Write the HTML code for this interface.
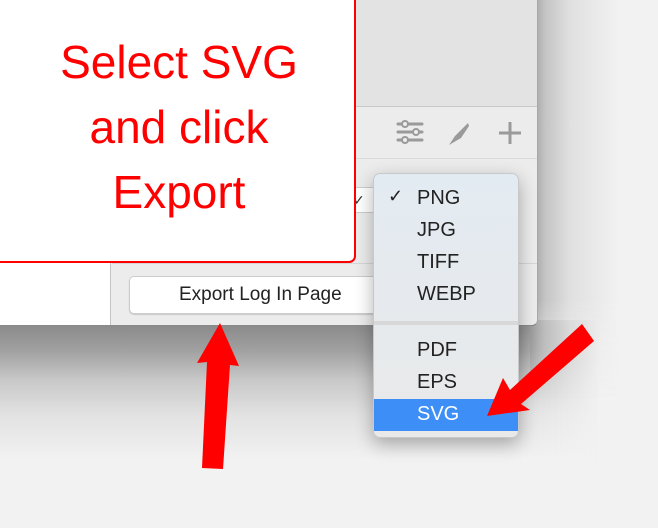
<!DOCTYPE html>
<html><head><meta charset="utf-8"><style>
*{margin:0;padding:0;box-sizing:border-box}
body{width:658px;height:528px;overflow:hidden;position:relative;font-family:"Liberation Sans",sans-serif;background:#f2f2f2}
.abs{position:absolute}
</style></head><body>
<div class="abs" style="left:0;top:320px;width:600px;height:140px;background:linear-gradient(#868686,#a0a0a0 30px,#c8c8c8 60px,#e2e2e2 95px,#f2f2f2 140px);-webkit-mask-image:linear-gradient(90deg,#000 520px,transparent 600px);mask-image:linear-gradient(90deg,#000 520px,transparent 600px)"></div>
<div class="abs" style="left:530px;top:0;width:90px;height:400px;background:linear-gradient(90deg,#9a9a9a,#c4c4c4 15px,#e0e0e0 40px,#f2f2f2 90px);-webkit-mask-image:linear-gradient(#000 300px,transparent 400px);mask-image:linear-gradient(#000 300px,transparent 400px)"></div>
<div class="abs" style="left:0;top:0;width:538px;height:326px;background:#ececec;border-bottom-right-radius:6px;border-right:1px solid #a8a8a8;border-bottom:1px solid #8a8a8a"></div>
<div class="abs" style="left:0;top:0;width:111px;height:325px;background:#fff;border-right:1px solid #c4c4c4"></div>
<div class="abs" style="left:112px;top:0;width:425px;height:107px;background:#e3e3e3;border-bottom:1px solid #c8c8c8"></div>
<div class="abs" style="left:112px;top:158px;width:425px;height:1px;background:#dadada"></div>
<div class="abs" style="left:112px;top:263px;width:425px;height:1px;background:#d6d6d6"></div>
<svg class="abs" style="left:395px;top:118px" width="135" height="30" viewBox="0 0 135 30">
<g stroke="#9a9a9a" stroke-width="3" fill="none" stroke-linecap="round">
<line x1="3" y1="6" x2="27" y2="6"/><line x1="3" y1="14" x2="27" y2="14"/><line x1="3" y1="22" x2="27" y2="22"/>
</g>
<g stroke="#9a9a9a" stroke-width="2" fill="#ececec"><circle cx="10" cy="6" r="3"/><circle cx="21" cy="14" r="3"/><circle cx="10" cy="22" r="3"/></g>
<path d="M54 27 L60 18 L73 5 L74 8 L66 20 Z" fill="#9a9a9a"/>
<g stroke="#9a9a9a" stroke-width="3"><line x1="115" y1="4" x2="115" y2="26"/><line x1="104" y1="15" x2="126" y2="15"/></g>
</svg>
<div class="abs" style="left:348px;top:187px;width:26px;height:26px;background:#fff;border:1px solid #ccc;font-size:14px;color:#333;padding:4px 0 0 4px">✓</div>
<div class="abs" style="left:345px;top:228px;font-size:14px;color:#333">k</div>
<div class="abs" style="left:129px;top:276px;width:260px;height:38px;background:#fff;border:1px solid #ccc;border-radius:5px;box-shadow:0 1px 1px rgba(0,0,0,.15);font-size:19px;color:#222;padding:7px 0 0 49px;white-space:nowrap;overflow:hidden">Export Log In Page</div>
<div class="abs" style="left:-6px;top:-6px;width:362px;height:269px;background:#fff;border:2px solid #f00;border-radius:7px;color:#f00;font-size:46px;text-align:center;line-height:65px;padding-top:34px;padding-left:8px">Select SVG<br>and click<br>Export</div>
<div class="abs" style="left:373px;top:173px;width:146px;height:265px;background:linear-gradient(#e3ebf2,#e9e9e9);border:1px solid #c8c8c8;border-radius:7px;box-shadow:0 6px 18px rgba(0,0,0,.3);font-size:20px;color:#222;overflow:hidden">
<div class="abs" style="left:14px;top:12px;font-size:18px">✓</div>
<div class="abs" style="left:43px;top:13px">PNG</div>
<div class="abs" style="left:43px;top:45px">JPG</div>
<div class="abs" style="left:43px;top:77px">TIFF</div>
<div class="abs" style="left:43px;top:109px">WEBP</div>
<div class="abs" style="left:0;top:147px;width:146px;height:4px;background:#d8d8d8"></div>
<div class="abs" style="left:43px;top:165px">PDF</div>
<div class="abs" style="left:43px;top:197px">EPS</div>
<div class="abs" style="left:0;top:225px;width:146px;height:32px;background:#3d8ff7"></div>
<div class="abs" style="left:43px;top:229px;color:#fff">SVG</div>
</div>
<svg class="abs" style="left:0;top:0" width="658" height="528">
<polygon fill="#f00" points="220,323 239,366 230,365 223,469 202,468 207,362 197,363"/>
<polygon fill="#f00" points="487,416 503,378 510,390 582,324 594,341 521,404 530,410"/>
</svg>
</body></html>
